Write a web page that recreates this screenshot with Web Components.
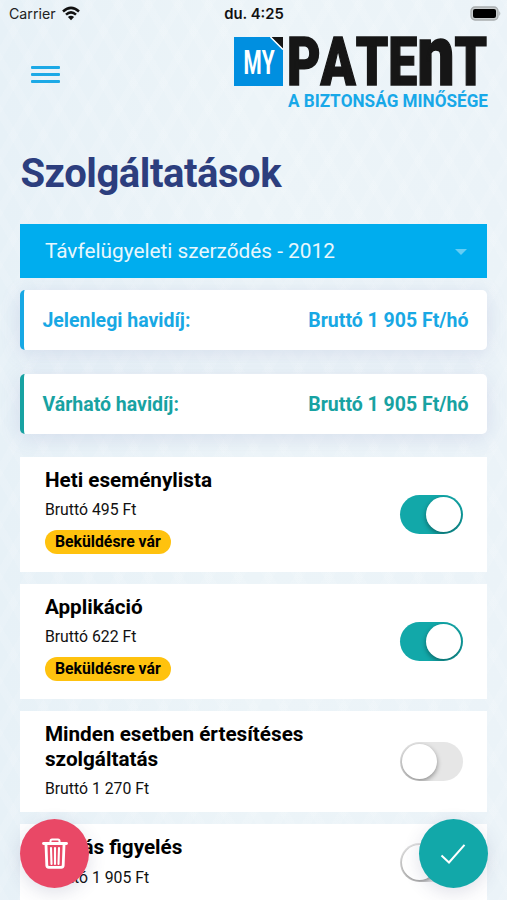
<!DOCTYPE html>
<html lang="hu">
<head>
<meta charset="utf-8">
<meta name="viewport" content="width=device-width, initial-scale=1">
<title>Szolgáltatások</title>
<style>
  body {
    margin: 0;
    font-family: Roboto, "Liberation Sans", sans-serif;
    color: #000;
  }
</style>
</head>
<body>
<services-screen>
  <status-bar slot="header" carrier="Carrier" time="du. 4:25"></status-bar>
  <app-header slot="header"></app-header>

  <contract-select>Távfelügyeleti szerződés - 2012</contract-select>
  <fee-card>Jelenlegi havidíj:<span slot="price">Bruttó 1 905 Ft/hó</span></fee-card>
  <fee-card class="expected">Várható havidíj:<span slot="price">Bruttó 1 905 Ft/hó</span></fee-card>

  <service-item price="Bruttó 495 Ft" badge="Beküldésre vár" checked>Heti eseménylista</service-item>
  <service-item price="Bruttó 622 Ft" badge="Beküldésre vár" checked>Applikáció</service-item>
  <service-item price="Bruttó 1 270 Ft">Minden esetben értesítéses szolgáltatás</service-item>
  <service-item price="Bruttó 1 905 Ft">Nyitás figyelés</service-item>

  <round-button slot="actions">
    <svg width="26" height="31" viewBox="0 0 26 31" fill="none" stroke="#fff">
      <path d="M8.500 4.500V3Q8.500 1.500 10 1.500h6Q17.500 1.500 17.500 3v1.500" stroke-width="2"/>
      <path d="M1.500 5.500h23" stroke-width="2.800" stroke-linecap="round"/>
      <path d="M4 7l.8 20.500Q5 29.300 6.800 29.300h12.400Q21 29.300 21.200 27.500L22 7" stroke-width="2.800"/>
      <path d="M9 10l.5 16M13 10v16M17 10l-.5 16" stroke-width="2.100" stroke-linecap="round"/>
    </svg>
  </round-button>
  <round-button slot="actions" class="confirm">
    <svg width="26" height="22" viewBox="0 0 26 22" fill="none" stroke="#fff" stroke-width="2">
      <path d="M1.500 12.500L9 19.500 24.500 1.800"/>
    </svg>
  </round-button>
</services-screen>

<script>
class ServicesScreen extends HTMLElement {
  constructor() {
    super()
    this.attachShadow({ mode: 'open' })
  }

  connectedCallback() {
    this.shadowRoot.innerHTML = this.html
  }

  get html() {
    return `
      <style>
        :host {
          display: block;
          position: relative;
          height: 900px;
          overflow: hidden;
          background:
            repeating-linear-gradient(60deg, rgba(255, 255, 255, .09) 0 8px, transparent 8px 26px),
            repeating-linear-gradient(-60deg, rgba(255, 255, 255, .09) 0 8px, transparent 8px 26px),
            linear-gradient(90deg, #e7f1f7, #ecf4f8 50%, #ebf3f8);
        }
        main {
          display: flex;
          flex-direction: column;
          padding: 0 20px 0 20.400px;
        }
        h1 {
          margin: 0 0 25px;
          padding-top: 1px;
          font-size: 40px;
          line-height: 50px;
          font-weight: 700;
          letter-spacing: -.45px;
          color: #2c3e7e;
        }
        .actions {
          position: absolute;
          left: 20px;
          right: 19.500px;
          bottom: 12px;
          display: flex;
          justify-content: space-between;
        }
      </style>
      <slot name="header"></slot>
      <main>
        <h1>Szolgáltatások</h1>
        <slot></slot>
      </main>
      <div class="actions"><slot name="actions"></slot></div>
    `
  }
}

class StatusBar extends HTMLElement {
  constructor() {
    super()
    this.attachShadow({ mode: 'open' })
  }

  connectedCallback() {
    this.shadowRoot.innerHTML = this.html
  }

  get html() {
    return `
      <style>
        :host {
          display: grid;
          grid-template-columns: 1fr auto 1fr;
          align-items: center;
          height: 27px;
          padding: 0 5px 0 9px;
          font-family: Inter, "Liberation Sans", sans-serif;
          font-size: 14.200px;
          color: #222;
        }
        .network {
          display: flex;
          align-items: center;
          gap: 6px;
        }
        .time {
          margin-right: 3px;
          font-size: 14.800px;
          font-weight: 600;
          color: #111;
        }
        .battery {
          justify-self: end;
        }
        svg {
          display: block;
        }
      </style>
      <div class="network">
        <span>${this.getAttribute('carrier')}</span>
        <svg width="18" height="15" viewBox="0 0 18 15" fill="none" stroke="#111" stroke-width="2.500">
          <path d="M1 5.500Q9-1.800 17 5.500"/>
          <path d="M4 8.700Q9 4 14 8.700"/>
          <path d="M9 14.200L5.900 11Q9 8.500 12.100 11z" fill="#111" stroke="none"/>
        </svg>
      </div>
      <span class="time">${this.getAttribute('time')}</span>
      <svg class="battery" width="32" height="15" viewBox="0 0 32 15">
        <rect x="1" y="1" width="27" height="13" rx="4" fill="#c9cdcf" stroke="#a9adaf" stroke-width="1.300"/>
        <rect x="3" y="3" width="23" height="9" rx="2" fill="#000"/>
        <path d="M29.300 5q2 2.500 0 5z" fill="#a9adaf"/>
      </svg>
    `
  }
}

class AppHeader extends HTMLElement {
  constructor() {
    super()
    this.attachShadow({ mode: 'open' })
  }

  connectedCallback() {
    this.shadowRoot.innerHTML = this.html
  }

  get html() {
    return `
      <style>
        :host {
          display: flex;
          justify-content: space-between;
          height: 121px;
          padding: 0 19px 0 31px;
        }
        .menu {
          display: flex;
          flex-direction: column;
          gap: 4.500px;
          padding-top: 39px;
        }
        .menu i {
          width: 29px;
          height: 2.600px;
          border-radius: 1px;
          background: #1ca9e6;
        }
        svg {
          display: block;
          margin-top: 10px;
          overflow: visible;
          font-kerning: none;
        }
      </style>
      <div class="menu"><i></i><i></i><i></i></div>
      <svg width="254" height="76" viewBox="0 0 254 76" font-family="Roboto">
        <path d="M0 0h37l12 12v37H0z" fill="#008fe0"/>
        <path d="M37 0h12v12z" fill="#161616"/>
        <path d="M36.500 0L49 12.500" stroke="#fff" stroke-width="1.500"/>
        <text transform="translate(9.500 36.500) scale(.63 1)" fill="#fff" font-size="33" font-weight="700">MY</text>
        <text transform="translate(53 48.300) scale(.77 1)" fill="#161616" stroke="#161616" stroke-width="1.500" font-size="67" font-weight="900">PATE<tspan font-size="86">n</tspan>T</text>
        <text x="54" y="70" fill="#18a8e8" font-size="17.500" font-weight="700" textLength="200" lengthAdjust="spacingAndGlyphs">A BIZTONSÁG MINŐSÉGE</text>
      </svg>
    `
  }
}

class ContractSelect extends HTMLElement {
  constructor() {
    super()
    this.attachShadow({ mode: 'open' })
  }

  connectedCallback() {
    this.shadowRoot.innerHTML = `
      <style>
        :host {
          display: flex;
          align-items: center;
          justify-content: space-between;
          box-sizing: border-box;
          height: 54px;
          margin-bottom: 12.400px;
          padding: 0 20px 0 24.500px;
          background: #00adee;
          color: #e8f7fd;
          font-size: 20.800px;
        }
        i {
          border: 6px solid transparent;
          border-top-color: #65cdf4;
          border-bottom: 0;
          margin-top: 2px;
        }
      </style>
      <span><slot></slot></span>
      <i></i>
    `
  }
}

class FeeCard extends HTMLElement {
  constructor() {
    super()
    this.attachShadow({ mode: 'open' })
  }

  connectedCallback() {
    this.shadowRoot.innerHTML = `
      <style>
        :host {
          display: flex;
          align-items: center;
          justify-content: space-between;
          box-sizing: border-box;
          height: 60px;
          margin-bottom: 23.300px;
          padding: 1px 18.500px 0 18px;
          border-left: 4px solid;
          border-radius: 5px;
          background: #fff;
          box-shadow: 0 4px 20px rgba(100, 110, 180, .16);
          color: #18a8e4;
          font-size: 19.500px;
          font-weight: 700;
        }
        :host(.expected) {
          color: #18a2a2;
        }
      </style>
      <span><slot></slot></span>
      <slot name="price"></slot>
    `
  }
}

class ServiceItem extends HTMLElement {
  constructor() {
    super()
    this.attachShadow({ mode: 'open' })
  }

  connectedCallback() {
    this.shadowRoot.innerHTML = this.html
  }

  get badge() {
    const text = this.getAttribute('badge')
    return text ? `<span class="badge">${text}</span>` : ''
  }

  get html() {
    return `
      <style>
        :host {
          display: flex;
          align-items: center;
          justify-content: space-between;
          margin-bottom: 12px;
          padding: 11px 24px 13px 24.500px;
          background: #fff;
        }
        .info {
          display: flex;
          flex-direction: column;
          align-items: flex-start;
          width: 290px;
        }
        .name {
          font-size: 20.700px;
          line-height: 25px;
          font-weight: 700;
        }
        .price {
          margin-top: 7.500px;
          font-size: 15.800px;
          line-height: 20px;
          color: #111;
        }
        .badge {
          margin: 10px 0 5px;
          padding: 0 10px;
          border-radius: 12px;
          background: #ffc20e;
          font-size: 15.800px;
          line-height: 23.500px;
          font-weight: 700;
        }
        toggle-switch {
          margin-top: 2.500px;
        }
      </style>
      <div class="info">
        <span class="name"><slot></slot></span>
        <span class="price">${this.getAttribute('price')}</span>
        ${this.badge}
      </div>
      <toggle-switch class="${this.hasAttribute('checked') ? 'on' : ''}"></toggle-switch>
    `
  }
}

class ToggleSwitch extends HTMLElement {
  constructor() {
    super()
    this.attachShadow({ mode: 'open' })
  }

  connectedCallback() {
    this.shadowRoot.innerHTML = `
      <style>
        :host {
          display: flex;
          box-sizing: border-box;
          width: 63px;
          height: 39px;
          padding: 2px;
          border-radius: 20px;
          overflow: hidden;
          background: #e6e6e6;
        }
        :host(.on) {
          justify-content: flex-end;
          background: #12a8a9;
        }
        i {
          width: 35px;
          height: 35px;
          border-radius: 50%;
          background: #fff;
          box-shadow: 0 2px 5px rgba(0, 0, 0, .4);
        }
      </style>
      <i></i>
    `
  }
}

class RoundButton extends HTMLElement {
  constructor() {
    super()
    this.attachShadow({ mode: 'open' })
  }

  connectedCallback() {
    this.shadowRoot.innerHTML = `
      <style>
        :host {
          display: flex;
          align-items: center;
          justify-content: center;
          width: 69px;
          height: 69px;
          border-radius: 50%;
          background: #e94866;
          box-shadow: 0 5px 18px rgba(60, 70, 120, .16);
        }
        :host(.confirm) {
          background: #12a8a9;
        }
      </style>
      <slot></slot>
    `
  }
}

customElements.define('services-screen', ServicesScreen)
customElements.define('status-bar', StatusBar)
customElements.define('app-header', AppHeader)
customElements.define('contract-select', ContractSelect)
customElements.define('fee-card', FeeCard)
customElements.define('service-item', ServiceItem)
customElements.define('toggle-switch', ToggleSwitch)
customElements.define('round-button', RoundButton)
</script>
</body>
</html>
